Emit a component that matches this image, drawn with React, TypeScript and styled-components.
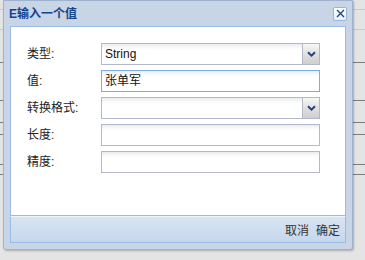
import React from 'react';
import styled, { createGlobalStyle } from 'styled-components';

const Global = createGlobalStyle`
  html, body { margin: 0; padding: 0; background: #e3e3e3; }
  body {
    width: 365px; height: 260px; overflow: hidden;
    font-family: "Liberation Sans", "Noto Sans CJK SC", sans-serif;
  }
`;

const Stage = styled.div`
  position: relative;
  width: 365px;
  height: 260px;
  overflow: hidden;
  background: #e4e4e4;
`;

const Backdrop = styled.div`
  display: flex;
  flex-direction: column;
`;

const BackLine = styled.div<{ $h: number; $dark?: boolean }>`
  height: ${p => p.$h}px;
  box-sizing: border-box;
  border-bottom: 1px solid ${p => (p.$dark ? '#7c7c7c' : '#c9c9c9')};
`;

const Win = styled.div`
  position: absolute;
  left: 3px;
  top: 0;
  width: 350px;
  height: 250px;
  box-sizing: border-box;
  border: 1px solid #9fb3cf;
  border-radius: 0 0 3px 3px;
  background: #c7d5e7;
  box-shadow: 1px 1px 2px rgba(0, 0, 0, 0.25);
  display: flex;
  flex-direction: column;
`;

const Header = styled.div`
  height: 25px;
  display: flex;
  align-items: center;
  justify-content: space-between;
  padding: 0 5px 0 5px;
`;

const Title = styled.div`
  font-size: 12px;
  font-weight: bold;
  color: #15428b;
  line-height: 14px;
  padding-top: 1px;
`;

const CloseBtn = styled.div`
  width: 14px;
  height: 14px;
  box-sizing: border-box;
  border: 1px solid #9ab5db;
  border-radius: 2px;
  background: linear-gradient(#ffffff, #e6eef8);
  display: flex;
  align-items: center;
  justify-content: center;
`;

const Body = styled.div`
  margin: 0 6px;
  height: 190px;
  box-sizing: border-box;
  border: 1px solid #99bbe8;
  background: #ffffff;
  padding: 16px 0 0 16px;
  display: flex;
  flex-direction: column;
  gap: 5px;
`;

const Row = styled.div`
  display: flex;
  align-items: center;
  height: 22px;
`;

const Label = styled.div`
  width: 74px;
  font-size: 12px;
  color: #222;
  line-height: 14px;
`;

const Field = styled.div<{ $focus?: boolean }>`
  width: 219px;
  height: 22px;
  box-sizing: border-box;
  border: 1px solid ${p => (p.$focus ? '#7eadd9' : '#b5b8c8')};
  background: linear-gradient(#e9ebee 0px, #f7f8f9 3px, #ffffff 6px);
  display: flex;
  align-items: center;
`;

const FieldText = styled.div`
  flex: 1;
  padding-left: 3px;
  font-size: 12px;
  color: #111;
  line-height: 14px;
`;

const Trigger = styled.div`
  width: 17px;
  height: 100%;
  box-sizing: border-box;
  border-left: 1px solid #b5b8c8;
  background: linear-gradient(#f7f7f7, #dcdcdc 60%, #cfcfcf);
  display: flex;
  align-items: center;
  justify-content: center;
`;

const Footer = styled.div`
  margin: 0 6px;
  height: 27px;
  box-sizing: border-box;
  border: 1px solid #99bbe8;
  border-top: 1px solid #eef4fb;
  background: linear-gradient(#d7e4f3, #c7d7eb);
  display: flex;
  align-items: center;
  justify-content: flex-end;
  gap: 7px;
  padding: 0 5px 0 0;
`;

const FootBtn = styled.div`
  font-size: 12px;
  color: #333;
  line-height: 14px;
  padding-top: 2px;
`;

const Chevron = () => (
  <svg width="9" height="6" viewBox="0 0 9 6">
    <path d="M1 1.2 L4.5 4.6 L8 1.2" fill="none" stroke="#24427c" strokeWidth="2" />
  </svg>
);

const XIcon = () => (
  <svg width="9" height="9" viewBox="0 0 9 9">
    <path d="M1 1 L8 8 M8 1 L1 8" stroke="#1f3f7a" strokeWidth="1.3" />
  </svg>
);

const lines: { h: number; dark?: boolean }[] = [
  { h: 10 }, { h: 20 }, { h: 33, dark: true }, { h: 38, dark: true },
  { h: 22, dark: true }, { h: 12, dark: true }, { h: 30, dark: true }, { h: 10, dark: true },
];

export default function App() {
  return (
    <Stage>
      <Global />
      <Backdrop>
        {lines.map((l, i) => (
          <BackLine key={i} $h={l.h} $dark={l.dark} />
        ))}
      </Backdrop>
      <Win>
        <Header>
          <Title>E输入一个值</Title>
          <CloseBtn>
            <XIcon />
          </CloseBtn>
        </Header>
        <Body>
          <Row>
            <Label>类型:</Label>
            <Field>
              <FieldText>String</FieldText>
              <Trigger><Chevron /></Trigger>
            </Field>
          </Row>
          <Row>
            <Label>值:</Label>
            <Field $focus>
              <FieldText>张单军</FieldText>
            </Field>
          </Row>
          <Row>
            <Label>转换格式:</Label>
            <Field>
              <FieldText />
              <Trigger><Chevron /></Trigger>
            </Field>
          </Row>
          <Row>
            <Label>长度:</Label>
            <Field>
              <FieldText />
            </Field>
          </Row>
          <Row>
            <Label>精度:</Label>
            <Field>
              <FieldText />
            </Field>
          </Row>
        </Body>
        <Footer>
          <FootBtn>取消</FootBtn>
          <FootBtn>确定</FootBtn>
        </Footer>
      </Win>
    </Stage>
  );
}
